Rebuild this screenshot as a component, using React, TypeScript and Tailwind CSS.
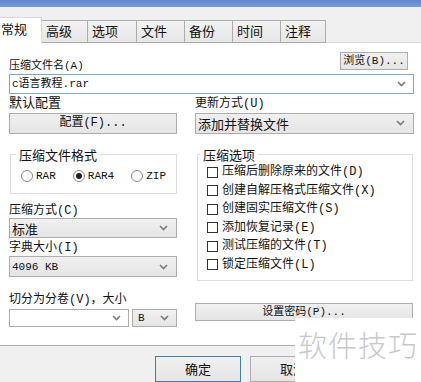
import React from "react";

const cjk = "font-['Noto_Sans_CJK_SC',sans-serif]";
const mix = "font-['Liberation_Mono','Noto_Sans_CJK_SC',monospace]";

function Chevron() {
  return (
    <svg width="9" height="6" viewBox="0 0 9 6" className="shrink-0">
      <polyline points="1,1 4.5,4.5 8,1" fill="none" stroke="#7a7a7a" strokeWidth="1.6" />
    </svg>
  );
}

function GrayBox({ children, className = "" }: { children?: React.ReactNode; className?: string }) {
  return (
    <div
      className={`flex items-center border border-[#adadad] bg-gradient-to-b from-[#f0f0f0] to-[#e5e5e5] text-[12px] text-[#111] ${className}`}
    >
      {children}
    </div>
  );
}

function Radio({ label, checked }: { label: string; checked?: boolean }) {
  return (
    <div className="flex items-center gap-[3px]">
      <div className="w-[12px] h-[12px] rounded-full border border-[#8a8a8a] bg-white flex items-center justify-center">
        {checked && <div className="w-[6px] h-[6px] rounded-full bg-[#222]" />}
      </div>
      <span className={`${mix} text-[11px] text-[#111]`}>{label}</span>
    </div>
  );
}

function Check({ label }: { label: string }) {
  return (
    <div className="h-[18.5px] flex items-center gap-[4px]">
      <div className="w-[11px] h-[11px] border border-[#333] bg-white" />
      <span className={`${mix} text-[12px] leading-[14px] text-[#111]`}>{label}</span>
    </div>
  );
}

export default function App() {
  const tabs: [string, number][] = [
    ["高级", 46],
    ["选项", 49],
    ["文件", 48],
    ["备份", 48],
    ["时间", 48],
    ["注释", 45],
  ];
  return (
    <div className={`relative w-[421px] h-[382px] overflow-hidden bg-white flex flex-col ${cjk}`}>
      <div className="h-[7px] bg-gradient-to-b from-[#6486cf] to-[#7c9ad8]" />
      <div className="h-[36px] bg-[#f0f0f0] flex items-end">
        <div className="w-[42px] h-[26px] bg-white border-t border-r border-[#d9d9d9] pl-[1px] pt-[3px] text-[13px] leading-[16px] text-[#111]">
          常规
        </div>
        {tabs.map(([t, w]) => (
          <div
            key={t}
            style={{ width: w }}
            className="h-[23px] border-t border-r border-b border-[#acacac] bg-gradient-to-b from-[#f3f3f3] to-[#e6e6e6] pl-[4px] pt-[2px] text-[13px] leading-[16px] text-[#111]"
          >
            {t}
          </div>
        ))}
        <div className="flex-1 border-b border-[#d9d9d9]" />
      </div>

      <div className="h-[303px] pl-[9px] pr-[7px] pt-[9px] flex flex-col">
        <div className="flex items-end justify-between">
          <span className={`${mix} text-[11px] leading-[14px] text-[#111] mb-[-3px]`}>压缩文件名(A)</span>
          <GrayBox className="w-[68px] h-[18px] mr-[6px] justify-center">
            <span className={`${mix} text-[11px]`}>浏览(B)...</span>
          </GrayBox>
        </div>
        <div className="mt-[4px] h-[20px] border border-[#7aaad0] bg-white flex items-center pl-[2px] pr-[7px]">
          <span className={`${mix} flex-1 text-[11px] text-[#111]`}>c语言教程.rar</span>
          <Chevron />
        </div>

        <div className="grid grid-cols-[168px_219px] gap-x-[18px]">
          <div className="flex flex-col">
            <span className="text-[13px] leading-[16px] text-[#111]">默认配置</span>
            <GrayBox className="mt-[3px] h-[21px] justify-center">
              <span className={`${mix} text-[12px]`}>配置(F)...</span>
            </GrayBox>

            <fieldset className="mt-[13px] ml-px border border-[#dcdcdc] pl-[10px] pb-[9px]">
              <legend className="ml-[-5px] px-[3px] text-[13px] leading-[16px] text-[#111]">压缩文件格式</legend>
              <div className="mt-[5px] flex items-center gap-[17px]">
                <Radio label="RAR" />
                <Radio label="RAR4" checked />
                <Radio label="ZIP" />
              </div>
            </fieldset>

            <span className={`${mix} mt-[10px] text-[12px] leading-[14px] text-[#111]`}>压缩方式(C)</span>
            <GrayBox className="h-[20px] pl-[2px] pr-[8px]">
              <span className="flex-1 text-[13px]">标准</span>
              <Chevron />
            </GrayBox>
            <span className={`${mix} mt-[2px] text-[12px] leading-[16px] text-[#111]`}>字典大小(I)</span>
            <GrayBox className="h-[21px] pl-[2px] pr-[8px]">
              <span className={`${mix} flex-1 text-[11px]`}>4096 KB</span>
              <Chevron />
            </GrayBox>

            <span className={`${mix} mt-[15px] text-[12px] leading-[16px] text-[#111]`}>切分为分卷(V)，大小</span>
            <div className="mt-[1px] flex gap-[3px]">
              <div className="w-[120px] h-[18px] border border-[#adadad] bg-white flex items-center justify-end pr-[7px]">
                <Chevron />
              </div>
              <GrayBox className="w-[45px] h-[18px] pl-[5px] pr-[7px]">
                <span className={`${mix} flex-1 text-[11px]`}>B</span>
                <Chevron />
              </GrayBox>
            </div>
          </div>

          <div className="flex flex-col">
            <span className={`${mix} text-[12px] leading-[16px] text-[#111] pt-[2px]`}>更新方式(U)</span>
            <GrayBox className="mt-[1px] h-[21px] pl-[2px] pr-[8px]">
              <span className="flex-1 text-[13px]">添加并替换文件</span>
              <Chevron />
            </GrayBox>

            <fieldset className="mt-[13px] ml-[2px] mr-px h-[134px] border border-[#dcdcdc] pl-[9px]">
              <legend className="ml-[-7px] px-[3px] text-[13px] leading-[16px] text-[#111]">压缩选项</legend>
              <div className="flex flex-col">
                <Check label="压缩后删除原来的文件(D)" />
                <Check label="创建自解压格式压缩文件(X)" />
                <Check label="创建固实压缩文件(S)" />
                <Check label="添加恢复记录(E)" />
                <Check label="测试压缩的文件(T)" />
                <Check label="锁定压缩文件(L)" />
              </div>
            </fieldset>

            <GrayBox className="mt-[22px] mr-px h-[18px] justify-center">
              <span className={`${mix} text-[11px]`}>设置密码(P)...</span>
            </GrayBox>
          </div>
        </div>
      </div>

      <div className="flex-1 border-t border-[#acacac] bg-[#f0f0f0] pl-[155px] pt-[10px] flex gap-[9px]">
        <div className="w-[86px] h-[26px] border border-[#3c7fb1] bg-gradient-to-b from-[#f0f0f0] to-[#e5e5e5] flex items-center justify-center text-[13px] text-[#111]">
          确定
        </div>
        <div className="w-[86px] h-[26px] border border-[#adadad] bg-gradient-to-b from-[#f0f0f0] to-[#e5e5e5] flex items-center justify-center text-[13px] text-[#111]">
          取消
        </div>
      </div>

      <div className="absolute left-[295px] top-[318px] w-[126px] h-[64px] bg-white flex items-center justify-center">
        <span className="text-[29px] font-light tracking-[1px] text-[#c8c8c8] mt-[-10px]">软件技巧</span>
      </div>
    </div>
  );
}
